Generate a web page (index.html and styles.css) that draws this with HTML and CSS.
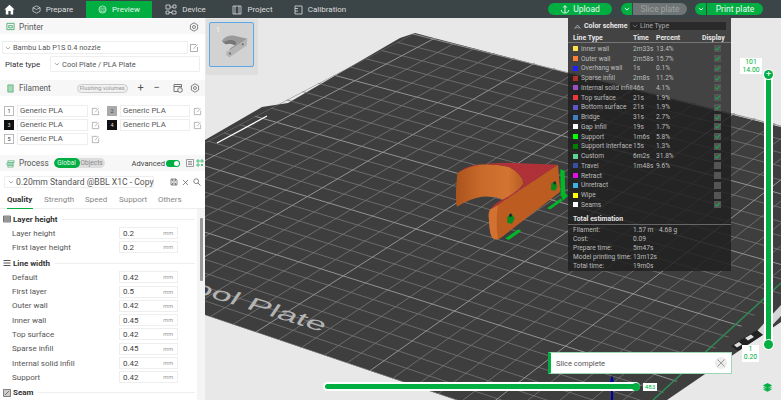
FILE: index.html
```html
<!DOCTYPE html>
<html lang="en">
<head>
<meta charset="utf-8">
<title>Preview</title>
<link rel="stylesheet" href="styles.css">
</head>
<body>
<svg class="defs" width="0" height="0" aria-hidden="true">
  <symbol id="edit" viewBox="0 0 10 10"><path d="M7 1.5H1.5v7h7V4M4.5 5.8 8.5 1.6" fill="none" stroke="#9a9a9a" stroke-width=".8"/></symbol>
  <symbol id="gear" viewBox="0 0 10 10"><circle cx="5" cy="5" r="1.5" fill="none" stroke="#666" stroke-width=".8"/><path d="M5 .8 8.6 2.9V7.1L5 9.2 1.4 7.1V2.9Z" fill="none" stroke="#666" stroke-width=".8" stroke-linejoin="round"/></symbol>
  <symbol id="caret" viewBox="0 0 6 4"><path d="M.8 1 3 3 5.2 1" fill="none" stroke="#888" stroke-width=".7"/></symbol>
  <symbol id="check" viewBox="0 0 7 7"><path d="M1.2 3.6 2.9 5.2 5.9 1.6" fill="none" stroke="#00c24a" stroke-width="1"/></symbol>
  <symbol id="wcaret" viewBox="0 0 6 4"><path d="M.8 1 3 3 5.2 1" fill="none" stroke="#fff" stroke-width=".9"/></symbol>
</svg>

<header class="topbar">
  <div class="home"><svg width="11" height="11" viewBox="0 0 11 11"><path d="M5.5.8 10.6 5.6H9.2V10.4H6.6V7H4.4V10.4H1.8V5.6H.4Z" fill="#fff"/></svg></div>
  <nav class="tabs">
    <a class="tab tab-prepare"><svg width="9" height="9" viewBox="0 0 10 10"><path d="M5 1 9 3v4L5 9 1 7V3ZM1 3l4 2 4-2" fill="none" stroke="#ddd" stroke-width=".8"/></svg>Prepare</a>
    <a class="tab tab-preview"><svg width="9" height="9" viewBox="0 0 10 10"><circle cx="5" cy="5" r="4" fill="none" stroke="#d8f5e2" stroke-width=".8"/><path d="M1.5 3.5h7M1.2 5.5h7.6M2 7.5h6" stroke="#d8f5e2" stroke-width=".7"/></svg>Preview</a>
    <a class="tab tab-device"><svg width="12" height="11" viewBox="0 0 12 11"><path d="M1 1h4v4H1zM8 1h3v3H8zM7 7h4v3H7zM1 7h3v3H1zM5 3h3M4 8.5h3" fill="none" stroke="#ddd" stroke-width=".8"/></svg>Device</a>
    <a class="tab tab-project"><svg width="10" height="10" viewBox="0 0 10 10"><path d="M1 1h8v8H1zM3 1v8M7 1v8" fill="none" stroke="#ddd" stroke-width=".8"/></svg>Project</a>
    <a class="tab tab-calib"><svg width="9" height="10" viewBox="0 0 9 10"><path d="M1 1h7v8H1zM1 3.5h3M1 6h3" fill="none" stroke="#ddd" stroke-width=".8"/></svg>Calibration</a>
  </nav>
  <div class="actions">
    <button class="btn btn-upload"><svg width="10" height="10" viewBox="0 0 10 10"><path d="M5 8.5V2M3.2 3.6 5 1.6 6.8 3.6M1.2 6c.3 2 1.8 3 3.8 3s3.5-1 3.8-3" fill="none" stroke="#fff" stroke-width=".9"/></svg>Upload</button>
    <div class="split"><span class="split-c"><svg width="6" height="4"><use href="#wcaret"/></svg></span><span class="split-l split-off">Slice plate</span></div>
    <div class="split"><span class="split-c"><svg width="6" height="4"><use href="#wcaret"/></svg></span><span class="split-l">Print plate</span></div>
  </div>
</header>

<div class="main">
  <aside class="side">
    <div class="sec-head sec-printer">
      <svg width="9" height="9" viewBox="0 0 10 10"><path d="M1 1.5h8v7H1zM3 4h4v2.5H3z" fill="none" stroke="#3aa565" stroke-width=".9"/></svg>
      <span class="sec-title">Printer</span>
      <svg class="push" width="10" height="10"><use href="#gear"/></svg>
    </div>
    <div class="printer-row">
      <div class="combo combo-printer"><svg width="6" height="4"><use href="#caret"/></svg>Bambu Lab P1S 0.4 nozzle</div>
      <svg width="10" height="10"><use href="#edit"/></svg>
    </div>
    <div class="plate-row">
      <span class="plate-label">Plate type</span>
      <div class="combo combo-plate"><svg width="6" height="4"><use href="#caret"/></svg>Cool Plate / PLA Plate</div>
    </div>

    <div class="sec-head sec-filament">
      <svg width="9" height="9" viewBox="0 0 10 10"><path d="M2 1h6v8H2z" fill="#a8d8b8" stroke="#3aa565" stroke-width=".7"/></svg>
      <span class="sec-title">Filament</span>
      <span class="pill">Flushing volumes</span>
      <span class="op op-plus">+</span><span class="op">&#8722;</span>
      <svg class="fil-ic" width="10" height="10" viewBox="0 0 10 10"><path d="M1 1.5h7.5v3M1 1.5v7h4M1 3.5h7.5" fill="none" stroke="#666" stroke-width=".9"/><circle cx="7" cy="7" r="2.3" fill="none" stroke="#666" stroke-width=".9"/></svg>
      <svg class="fil-gear" width="10" height="10"><use href="#gear"/></svg>
    </div>
    <div class="fil-grid">
      <div class="fil"><span class="num">1</span><span class="fil-name">Generic PLA</span><svg width="9" height="9"><use href="#edit"/></svg></div>
      <div class="fil"><span class="num num-gray">2</span><span class="fil-name">Generic PLA</span><svg width="9" height="9"><use href="#edit"/></svg></div>
      <div class="fil"><span class="num num-black">3</span><span class="fil-name">Generic PLA</span><svg width="9" height="9"><use href="#edit"/></svg></div>
      <div class="fil"><span class="num num-black">4</span><span class="fil-name">Generic PLA</span><svg width="9" height="9"><use href="#edit"/></svg></div>
      <div class="fil"><span class="num">5</span><span class="fil-name">Generic PLA</span><svg width="9" height="9"><use href="#edit"/></svg></div>
    </div>

    <div class="sec-head sec-process">
      <svg width="9" height="9" viewBox="0 0 10 10"><path d="M2 2h7v2H2zM1 4.5h7v2H1zM2 7h6v2H2z" fill="none" stroke="#3aa565" stroke-width=".7"/></svg>
      <span class="sec-title">Process</span>
      <span class="seg"><span class="seg-on">Global</span><span class="seg-off">Objects</span></span>
      <span class="adv">Advanced</span>
      <span class="switch"></span>
      <svg class="proc-ic" width="8" height="8" viewBox="0 0 8 8"><path d="M.5.5h7v7h-7zM2 2.5h4M2 4h4M2 5.5h4" fill="none" stroke="#777" stroke-width=".7"/></svg>
      <svg class="proc-ic2" width="8" height="8" viewBox="0 0 8 8"><path d="M1 1h2v2H1zM5 1h2v2H5zM1 5h2v2H1zM5 5l2 2M7 5 5 7" fill="none" stroke="#2fb568" stroke-width=".8"/></svg>
    </div>
    <div class="preset-row">
      <div class="combo combo-preset"><svg width="6" height="4"><use href="#caret"/></svg>0.20mm Standard @BBL X1C - Copy</div>
      <svg class="pr-ic" width="8" height="8" viewBox="0 0 8 8"><path d="M1 1h5l1 1v5H1zM2.5 1v2h3V1M2.5 7V5h3v2" fill="none" stroke="#555" stroke-width=".7"/></svg>
      <svg class="pr-ic" width="7" height="7" viewBox="0 0 7 7"><path d="M1 1l5 5M6 1 1 6" stroke="#555" stroke-width=".7"/></svg>
      <svg class="pr-ic" width="8" height="8" viewBox="0 0 8 8"><circle cx="3.2" cy="3.2" r="2.4" fill="none" stroke="#555" stroke-width=".7"/><path d="M5 5l2.5 2.5" stroke="#555" stroke-width=".8"/></svg>
    </div>
    <div class="ptabs">
      <span class="ptab ptab-on">Quality</span><span class="ptab">Strength</span><span class="ptab">Speed</span><span class="ptab">Support</span><span class="ptab">Others</span>
    </div>
    <div class="settings">
      <div class="list">
        <div class="group"><svg width="8" height="8" viewBox="0 0 8 8"><path d="M.5 1h7v6h-7zM.5 3h7M.5 5h7" fill="#bbb" stroke="#555" stroke-width=".7"/></svg><b>Layer height</b><i></i></div>
        <div class="param"><span>Layer height</span><div class="field"><span>0.2</span><em>mm</em></div></div>
        <div class="param"><span>First layer height</span><div class="field"><span>0.2</span><em>mm</em></div></div>
        <div class="group group-next"><svg width="8" height="8" viewBox="0 0 8 8"><path d="M.5 1.5h7M.5 6.500h7M.5 4h7" stroke="#555" stroke-width="1"/></svg><b>Line width</b><i></i></div>
        <div class="param"><span>Default</span><div class="field"><span>0.42</span><em>mm</em></div></div>
        <div class="param"><span>First layer</span><div class="field"><span>0.5</span><em>mm</em></div></div>
        <div class="param"><span>Outer wall</span><div class="field"><span>0.42</span><em>mm</em></div></div>
        <div class="param"><span>Inner wall</span><div class="field"><span>0.45</span><em>mm</em></div></div>
        <div class="param"><span>Top surface</span><div class="field"><span>0.42</span><em>mm</em></div></div>
        <div class="param"><span>Sparse infill</span><div class="field"><span>0.45</span><em>mm</em></div></div>
        <div class="param"><span>Internal solid infill</span><div class="field"><span>0.42</span><em>mm</em></div></div>
        <div class="param"><span>Support</span><div class="field"><span>0.42</span><em>mm</em></div></div>
        <div class="group group-next"><svg width="8" height="8" viewBox="0 0 8 8"><path d="M.5.500h7v7h-7zM2 6l4-4" fill="#ccc" stroke="#555" stroke-width=".7"/></svg><b>Seam</b><i></i></div>
      </div>
      <div class="track"><div class="thumb"></div></div>
    </div>
  </aside>

  <section class="view">
    <svg class="scene" viewBox="205 18 576 382" width="576" height="382">
      <defs>
        <clipPath id="gridclip"><polygon points="415,33 935,163 598,448 5,247"/></clipPath>
        <linearGradient id="wallgrad" gradientUnits="userSpaceOnUse" x1="-20" y1="0" x2="190" y2="0">
          <stop offset="0" stop-color="#a9531d"/>
          <stop offset=".35" stop-color="#c8682a"/>
          <stop offset=".75" stop-color="#d47432"/>
          <stop offset="1" stop-color="#b25a20"/>
        </linearGradient>
        <pattern id="redhatch" patternUnits="userSpaceOnUse" width="6" height="6" patternTransform="rotate(35)">
          <rect width="6" height="6" fill="#b5333a"/>
          <rect width="3" height="3" fill="#a02a30"/>
        </pattern>
      </defs>
      <polygon class="plate" points="205,140 262,107 288,103 400,38 415,33 430,37 568,73 781,127 781,322 667,400 456,400 205,315"/>
      <g clip-path="url(#gridclip)">
        <g class="gl">
          <path d="M205 -6.400 781 139.400M205 5.200 781 152.800M205 17 781 166.400M205 28.900 781 180M205 52.900 781 207.700M205 65.100 781 221.700M205 77.400 781 235.900M205 89.700 781 250.100M205 114.800 781 279M205 127.400 781 293.600M205 140.200 781 308.300M205 153 781 323.100M205 179 781 353M205 192.200 781 368.200M205 205.400 781 383.500M205 218.800 781 398.800M205 245.800 781 430M205 259.400 781 445.700M205 273.200 781 461.500M205 287 781 477.500M205 300.900 781 493.500"/>
          <path d="M5 247.400 415 33M50.600 262.800 455 43M73.400 270.500 475 48M96.200 278.200 495 53M119 286 515 58M164.600 301.400 555 68M187.400 309.100 575 73M210.200 316.800 595 78M233 324.500 615 83M278.600 339.900 655 93M301.400 347.600 675 98M324.200 355.300 695 103M347 363 715 108M392.600 378.500 755 118M415.400 386.200 775 123M438.200 393.900 795 128M461 401.600 815 133M506.600 417 855 143M529.400 424.700 875 148M552.200 432.400 895 153M575 440.100 915 158"/>
        </g>
        <g class="gm">
          <path d="M205 -18 781 126M205 40.900 781 193.800M205 102.200 781 264.500M205 166 781 338M205 232.200 781 414.300M205 315 781 509.700"/>
          <path d="M27.800 255.100 435 38M141.800 293.700 535 63M255.800 332.200 635 88M369.800 370.800 735 113M483.800 409.300 835 138"/>
        </g>
      </g>
      <path class="gline" d="M653 400 781 283"/>
      <path class="wline" d="M217 143 267 116"/>
      <text class="plate-text" transform="matrix(1.88 .58 -.62 .92 322 332)" text-anchor="end">Cool Plate</text>
      <polygon class="strip" points="757,331 781,305 781,316 763,335"/>
      <polygon class="lab" points="731,346 757,330 763,335 738,351"/>
      <path class="labw" d="M734 345l5-3 3 2.500-5 3zM745 338l6-3.500 3 2.500-6 3.500z"/>
      <path class="arrow" d="M612 375 615 385H613V400H611V385H609Z"/>

      <g transform="translate(462 150) scale(.3333)">
        <path class="m-wall" d="M-14 70Q10 52 40 45 90 38 140 50 180 70 185 100 170 125 125 150 100 138 60 140 25 145-15 170-22 150-14 70Z"/>
        <path class="m-red" d="M-14 70Q30 38 130 38L288 44 92 175 85 178Q98 160 120 150 170 125 185 100 180 70 140 50 90 38 40 45 10 52-12 68Z"/>
        <path class="m-side" d="M288 44 295 125 115 265Q100 272 90 262 82 250 80 195 80 178 92 175Z"/>
        <path class="m-front" d="M92 175Q80 178 80 195 82 250 90 262 97 270 108 268 100 220 108 166Z"/>
        <path class="m-green" d="M295 58 308 62 310 140 296 140Z"/>
        <path class="m-green" d="M130 265 170 238 178 243 140 270Z M255 175 295 146 304 150 265 178Z M298 145 310 128 318 138 305 150Z"/>
        <path class="m-dark" d="M136 200 148 190 158 205 150 222 136 218Z M268 100 280 94 286 108 280 122 267 120Z"/>
        <path class="m-bolt" d="M141 195 147 190 150 198 144 202Z M274 97 280 94 282 101 276 104Z"/>
      </g>
    </svg>

    <div class="thumbs">
      <div class="thumb-card">
        <span class="thumb-num">1</span>
        <svg class="thumb-pic" width="30" height="27" viewBox="60 55 90 80">
          <path d="M66 78Q75 62 100 62L142 72 88 108Q86 100 105 92 112 86 108 80 95 70 78 78 72 82 66 78Z" fill="#9a9a9a"/>
          <path d="M66 78Q72 82 78 78 95 70 108 80 112 86 105 92 92 84 80 88 72 90 66 78Z" fill="#777"/>
          <path d="M142 72 140 92 88 128 78 120 80 108 88 108Z" fill="#b5b5b5"/>
          <circle cx="90" cy="116" r="3" fill="#666"/><circle cx="128" cy="88" r="3" fill="#666"/>
        </svg>
      </div>
    </div>

    <div class="legend">
      <div class="lg-head">
        <svg width="7" height="5" viewBox="0 0 7 5"><path d="M.6 4.500 3.500 1 6.400 4.500M2 4.500 3.500 3 5 4.500" fill="none" stroke="#bbb" stroke-width=".8"/></svg>
        <b>Color scheme</b>
        <div class="lg-combo"><svg width="6" height="4"><use href="#caret"/></svg>Line Type</div>
      </div>
      <div class="lg-cols lg-row"><span class="lg-c1">Line Type</span><span>Time</span><span>Percent</span><span class="lg-disp">Display</span></div>
      <div class="lg-rows">
        <div class="lg-row"><i class="sw c-inner"></i><span>Inner wall</span><span>2m33s</span><span>13.4%</span><span class="cb"><svg width="7" height="7"><use href="#check"/></svg></span></div>
        <div class="lg-row"><i class="sw c-outer"></i><span>Outer wall</span><span>2m58s</span><span>15.7%</span><span class="cb"><svg width="7" height="7"><use href="#check"/></svg></span></div>
        <div class="lg-row"><i class="sw c-over"></i><span>Overhang wall</span><span>1s</span><span>0.1%</span><span class="cb"><svg width="7" height="7"><use href="#check"/></svg></span></div>
        <div class="lg-row"><i class="sw c-sparse"></i><span>Sparse infill</span><span>2m8s</span><span>11.2%</span><span class="cb"><svg width="7" height="7"><use href="#check"/></svg></span></div>
        <div class="lg-row"><i class="sw c-solid"></i><span>Internal solid infill</span><span>46s</span><span>4.1%</span><span class="cb"><svg width="7" height="7"><use href="#check"/></svg></span></div>
        <div class="lg-row"><i class="sw c-top"></i><span>Top surface</span><span>21s</span><span>1.9%</span><span class="cb"><svg width="7" height="7"><use href="#check"/></svg></span></div>
        <div class="lg-row"><i class="sw c-bottom"></i><span>Bottom surface</span><span>21s</span><span>1.9%</span><span class="cb"><svg width="7" height="7"><use href="#check"/></svg></span></div>
        <div class="lg-row"><i class="sw c-bridge"></i><span>Bridge</span><span>31s</span><span>2.7%</span><span class="cb"><svg width="7" height="7"><use href="#check"/></svg></span></div>
        <div class="lg-row"><i class="sw c-gap"></i><span>Gap infill</span><span>19s</span><span>1.7%</span><span class="cb"><svg width="7" height="7"><use href="#check"/></svg></span></div>
        <div class="lg-row"><i class="sw c-support"></i><span>Support</span><span>1m6s</span><span>5.8%</span><span class="cb"><svg width="7" height="7"><use href="#check"/></svg></span></div>
        <div class="lg-row"><i class="sw c-sint"></i><span>Support interface</span><span>15s</span><span>1.3%</span><span class="cb"><svg width="7" height="7"><use href="#check"/></svg></span></div>
        <div class="lg-row"><i class="sw c-custom"></i><span>Custom</span><span>6m2s</span><span>31.8%</span><span class="cb"><svg width="7" height="7"><use href="#check"/></svg></span></div>
        <div class="lg-row"><i class="sw c-travel"></i><span>Travel</span><span>1m48s</span><span>9.6%</span><span class="cb"></span></div>
        <div class="lg-row"><i class="sw c-retract"></i><span>Retract</span><span></span><span></span><span class="cb"></span></div>
        <div class="lg-row"><i class="sw c-unret"></i><span>Unretract</span><span></span><span></span><span class="cb"></span></div>
        <div class="lg-row"><i class="sw c-wipe"></i><span>Wipe</span><span></span><span></span><span class="cb"></span></div>
        <div class="lg-row"><i class="sw c-seam"></i><span>Seams</span><span></span><span></span><span class="cb"><svg width="7" height="7"><use href="#check"/></svg></span></div>
      </div>
      <div class="lg-total">Total estimation</div>
      <div class="lg-est">
        <div class="est"><span>Filament:</span><span>1.57 m</span><span>4.68 g</span></div>
        <div class="est"><span>Cost:</span><span>0.09</span></div>
        <div class="est"><span>Prepare time:</span><span>5m47s</span></div>
        <div class="est"><span>Model printing time:</span><span>13m12s</span></div>
        <div class="est"><span>Total time:</span><span>19m0s</span></div>
      </div>
    </div>

    <div class="vslider">
      <div class="vtag vtag-top">101<br>14.00</div>
      <div class="vbar"><span class="knob knob-top">+</span><span class="knob knob-bot"></span></div>
      <div class="vtag vtag-bot">1<br>0.20</div>
    </div>
    <svg class="layers" width="9" height="9" viewBox="0 0 9 9"><path d="M4.500.5 8.500 2.500 4.500 4.500.5 2.500ZM.5 4.500 4.500 6.500 8.500 4.500M.5 6.300 4.500 8.300 8.500 6.300" fill="#00ae42" stroke="#00ae42" stroke-width=".8"/></svg>

    <div class="hslider"><div class="hbar"><span class="hknob"></span></div><div class="htag">483</div></div>

    <div class="toast">
      <span class="toast-text">Slice complete</span>
      <span class="toast-x"><svg width="8" height="8" viewBox="0 0 8 8"><path d="M.5.500l7 7M7.500.500l-7 7" stroke="#8a8a8a" stroke-width=".8"/></svg></span>
    </div>
  </section>
</div>
</body>
</html>
```
FILE: styles.css
```css
* { box-sizing: border-box; }
html, body { margin: 0; padding: 0; width: 781px; height: 400px; overflow: hidden; }
body { font-family: Roboto, "Liberation Sans", sans-serif; font-size: 8px; color: #333; background: #e8e8e8; display: flex; flex-direction: column; }
.defs { position: absolute; }
svg { display: block; flex: none; }

/* top bar */
.topbar { height: 18px; flex: none; background: #3b4446; display: flex; align-items: stretch; color: #ddd; }
.home { width: 19px; padding-left: 4px; display: flex; align-items: center; }
.tabs { display: flex; }
.tab { display: flex; align-items: center; justify-content: center; gap: 5px; font-size: 8px; color: #ddd; margin-top: 1px; }
.tab-prepare { width: 67px; }
.tab-preview { width: 66px; background: #00ae42; color: #e4f8ec; }
.tab-device { width: 67px; }
.tab-project { width: 67px; }
.tab-calib { width: 68px; }
.actions { margin-left: auto; margin-right: 18px; display: flex; align-items: center; gap: 8px; }
.btn { height: 12px; width: 64px; border: 0; border-radius: 6px; background: #00ae42; color: #eafaf0; font: 8.500px Roboto, sans-serif; display: flex; align-items: center; justify-content: center; gap: 3px; padding: 0; }
.btn-upload { margin-right: 1px; }
.split { display: flex; height: 12px; border-radius: 6px; overflow: hidden; gap: 1px; }
.split-c { width: 11px; background: #00ae42; display: flex; align-items: center; justify-content: center; }
.split-l { width: 56px; background: #00ae42; color: #eafaf0; display: flex; align-items: center; justify-content: center; font-size: 8.500px; }
.split-off { width: 54px; background: #6f7574; color: #9ea3a2; }

/* main */
.main { flex: 1; display: flex; min-height: 0; }
.side { width: 205px; flex: none; background: #fff; display: flex; flex-direction: column; overflow: hidden; }
.sec-head { display: flex; align-items: center; background: #f7f7f7; padding-left: 6px; flex: none; }
.sec-title { font-size: 8.200px; color: #555; margin-left: 4px; }
.push { margin-left: auto; margin-right: 6px; }
.sec-printer { height: 15px; margin-top: 1px; }
.combo { border: 1px solid #eee; border-radius: 1px; display: flex; align-items: center; gap: 2px; color: #555; font-size: 7.500px; padding-left: 2px; }
.printer-row { margin: 7px 0 0 2px; display: flex; align-items: center; gap: 1px; height: 13px; }
.combo-printer { width: 186px; height: 13px; font-size: 7.400px; }
.plate-row { margin: 2px 0 0 5px; height: 16px; display: flex; align-items: center; }
.plate-label { width: 45px; font-size: 8px; color: #333; }
.combo-plate { width: 150px; height: 16px; padding-left: 3px; }
.sec-filament { height: 16px; margin-top: 8px; }
.pill { margin-left: 26px; width: 51px; height: 9px; border: 1px solid #ccc; border-radius: 5px; background: #f0f0f0; color: #999; font-size: 5.800px; line-height: 7px; text-align: center; white-space: nowrap; }
.op { font-size: 11px; line-height: 10px; color: #555; width: 10px; text-align: center; }
.op-plus { margin-left: 8px; margin-right: 6px; }
.fil-ic { margin-left: 11px; }
.fil-gear { margin-left: 7px; }
.fil-grid { margin: 9px 0 0 4px; display: grid; grid-template-columns: 103px 95px; row-gap: 2px; flex: none; }
.fil { display: flex; align-items: center; height: 12px; }
.num { width: 10px; height: 10px; border: 1px solid #bbb; background: #fff; font-size: 5.500px; line-height: 8px; text-align: center; color: #333; flex: none; }
.num-gray { background: #aaa; border-color: #aaa; color: #444; }
.num-black { background: #111; border-color: #111; color: #ddd; }
.fil-name { width: 71px; height: 12px; margin: 0 3px; border: 1px solid #eee; padding-left: 2px; font-size: 7.800px; line-height: 10px; color: #555; }
.sec-process { height: 16px; margin-top: 10px; }
.seg { margin-left: 5px; width: 51px; height: 10px; border-radius: 5px; background: #ddd; display: flex; font-size: 6.500px; line-height: 10px; overflow: hidden; }
.seg-on { width: 26px; background: #00ae42; color: #e4f8ec; border-radius: 5px; text-align: center; }
.seg-off { color: #888; padding-left: 1px; }
.adv { margin-left: 27px; font-size: 7.600px; color: #444; }
.switch { width: 14px; height: 7px; margin-left: 1px; background: #00ae42; border-radius: 4px; position: relative; }
.switch::after { content: ""; position: absolute; right: 1px; top: 1px; width: 5px; height: 5px; border-radius: 50%; background: #fff; }
.proc-ic { margin-left: 6px; }
.proc-ic2 { margin-left: 2px; }
.preset-row { margin: 5px 0 0 4px; height: 12px; display: flex; align-items: center; flex: none; }
.combo-preset { width: 150px; height: 12px; margin-right: 16px; padding-left: 3px; font-size: 8.600px; white-space: nowrap; }
.pr-ic { margin-right: 4px; }
.ptabs { margin-top: 6px; height: 15px; border-bottom: 1px solid #eee; padding-left: 7px; display: grid; grid-template-columns: 37px 41px 34px 39px 1fr; flex: none; font-size: 8px; color: #888; }
.ptab { line-height: 12px; height: 15px; }
.ptab-on { width: 26px; font-weight: 700; color: #333; border-bottom: 1px solid #00ae42; height: 14.500px; }
.settings { display: flex; flex: 1; min-height: 0; }
.list { width: 197px; padding: 3px 0 0 3px; }
.group { display: flex; align-items: center; height: 14px; gap: 2px; font-size: 8px; color: #333; }
.group b { font-weight: 700; white-space: nowrap; }
.group i { flex: 1; height: 1px; background: #eee; margin: 0 2px 0 3px; }
.group-next { margin-top: 1.500px; }
.param { display: flex; align-items: center; justify-content: space-between; height: 14.300px; padding: 0 19px 0 9px; color: #555; font-size: 8px; }
.field { width: 59px; height: 12px; border: 1px solid #eee; display: flex; align-items: center; justify-content: space-between; padding: 0 4px 0 3px; color: #444; }
.field em { font-style: normal; font-size: 5.500px; color: #999; }
.track { width: 8px; background: #f4f4f4; padding: 9px 0 0 3px; }
.thumb { width: 3px; height: 63px; background: #999; border-radius: 1px; }

/* viewport */
.view { flex: 1; position: relative; overflow: hidden; background: #e8e8e8; }
.scene { position: absolute; left: 0; top: 0; }
.plate { fill: #3d3e3d; }
.gl { stroke: #767776; stroke-width: .8; fill: none; }
.gm { stroke: #929392; stroke-width: 1; fill: none; }
.gline { stroke: #2f8a55; stroke-width: 1.500; fill: none; }
.wline { stroke: #fff; stroke-width: 1.300; fill: none; }
.plate-text { font-family: "Liberation Sans", sans-serif; font-size: 18px; fill: #b4b4b4; }
.strip { fill: #d6d6d6; }
.lab { fill: #222; }
.labw { fill: #ddd; }
.arrow { fill: #0000a8; }
.m-wall { fill: url(#wallgrad); }
.m-red { fill: url(#redhatch); }
.m-side { fill: #bd5c20; }
.m-front { fill: #d27232; }
.m-green { fill: #00b828; }
.m-dark { fill: #0a8a1e; }
.m-bolt { fill: #123; }

.thumbs { position: absolute; left: 1px; top: 1px; width: 52px; height: 56px; background: #dedede; padding: 3px; }
.thumb-card { width: 45px; height: 45px; border: 1px solid #5aa8e8; border-radius: 2px; background: #d2d2d2; position: relative; }
.thumb-num { position: absolute; left: 6px; top: 3px; color: #f4f4f4; font-size: 7px; }
.thumb-pic { position: absolute; left: 10px; top: 10px; }

.legend { position: absolute; left: 363px; top: 0; width: 163px; height: 253px; background: rgba(30,30,30,.82); color: #bdbdbd; font-size: 6.600px; }
.lg-head { height: 15px; display: flex; align-items: center; padding: 1px 0 0 6px; color: #e8e8e8; white-space: nowrap; }
.lg-head b { font-weight: 700; margin-left: 3px; font-size: 7px; }
.lg-combo { margin-left: auto; margin-right: 5px; width: 96px; height: 8px; background: #2a2a2a; display: flex; align-items: center; gap: 2px; padding-left: 2px; font-size: 6.900px; color: #aaa; }
.lg-row { display: grid; grid-template-columns: 8px 52px 23px 58px 7px; align-items: center; height: 9.750px; padding-left: 5px; white-space: nowrap; }
.lg-cols { grid-template-columns: 60px 23px 46px 30px; height: 9px; margin-top: 0; color: #e6e6e6; font-weight: 700; font-size: 6.900px; }
.lg-disp { white-space: nowrap; }
.lg-rows { border-top: 1px solid #777; padding-top: 1px; }
.sw { width: 5px; height: 5px; display: block; }
.cb { width: 7px; height: 7px; background: #555; display: block; }
.c-inner { background: #ffe14d; } .c-outer { background: #ff7d38; } .c-over { background: #1f1fff; }
.c-sparse { background: #b03029; } .c-solid { background: #9a4fc8; } .c-top { background: #f03838; }
.c-bottom { background: #5f55c8; } .c-bridge { background: #4080c0; } .c-gap { background: #fff; }
.c-support { background: #0f0; } .c-sint { background: #008000; } .c-custom { background: #5ed194; }
.c-travel { background: #384fa0; } .c-retract { background: #e010e0; } .c-unret { background: #40b0e0; }
.c-wipe { background: #ff0; } .c-seam { background: #fff; }
.lg-total { margin-top: 4px; padding-left: 5px; height: 10px; line-height: 10px; font-weight: 700; color: #e6e6e6; font-size: 6.900px; }
.lg-est { border-top: 1px solid #666; padding: 1px 0 0 5px; }
.est { display: grid; grid-template-columns: 60px 26px 30px; height: 9px; line-height: 9px; white-space: nowrap; }

.vslider { position: absolute; left: 534px; top: 40px; width: 34px; height: 304px; }
.vbar { position: absolute; left: 25px; top: 16px; width: 9px; height: 271px; background: #00ae42; border-left: 2px solid #fff; border-right: 2px solid #fff; }
.knob { position: absolute; left: -2px; width: 9px; height: 9px; border-radius: 50%; background: #00ae42; box-shadow: 0 0 0 1px #fff; color: #fff; font-size: 9px; line-height: 9px; text-align: center; }
.knob-top { top: -4px; }
.knob-bot { bottom: -4px; }
.vtag { position: absolute; background: #fff; color: #00ae42; font-size: 6.800px; line-height: 8px; text-align: center; }
.vtag-top { left: 1px; top: 0; width: 22px; height: 16px; }
.vtag-bot { left: 3px; top: 287px; width: 17px; height: 17px; }
.layers { position: absolute; left: 558px; top: 365px; }

.hslider { position: absolute; left: 118px; top: 364px; display: flex; align-items: center; gap: 3px; }
.hbar { width: 317px; height: 9px; background: #fff; border-radius: 5px; padding: 2px; position: relative; }
.hbar::before { content: ""; display: block; height: 5px; background: #00ae42; border-radius: 3px; }
.hknob { position: absolute; right: 0; top: .500px; width: 8px; height: 8px; border-radius: 50%; background: #00ae42; }
.htag { width: 14px; height: 8px; background: #fff; color: #00ae42; font-size: 6.200px; line-height: 8px; text-align: center; }

.toast { position: absolute; left: 343px; top: 334px; width: 184px; height: 22px; background: #fff; border: 1px solid #9fd8b4; border-left: 3px solid #00ae42; display: flex; align-items: center; justify-content: space-between; padding: 0 4px 0 5px; font-size: 7.500px; color: #555; }
.toast-x { width: 12px; height: 12px; border-radius: 50%; background: #ececec; display: flex; align-items: center; justify-content: center; }
```
